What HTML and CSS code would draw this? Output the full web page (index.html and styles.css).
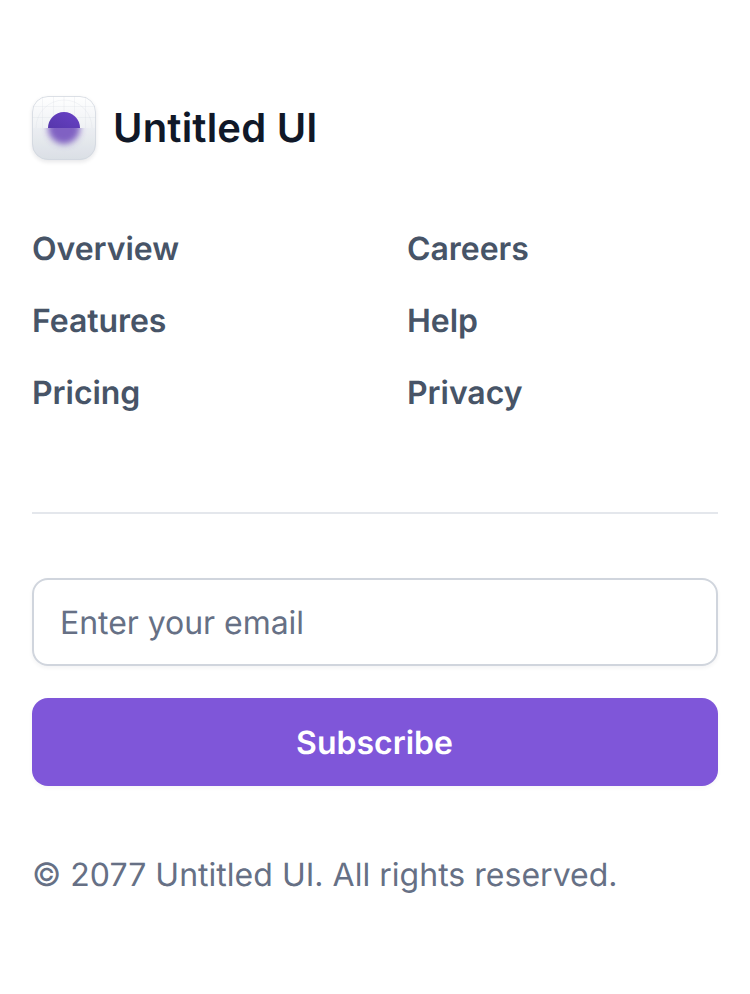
FILE: index.html
```html
<!DOCTYPE html>
<html lang="en">
<head>
<meta charset="utf-8">
<title>Untitled UI</title>
<link rel="stylesheet" href="styles.css">
</head>
<body>
<footer class="footer">
  <div class="brand">
    <div class="mark">
      <svg width="64" height="64" viewBox="0 0 64 64" aria-hidden="true">
        <defs>
          <linearGradient id="plate" x1="0" y1="0" x2="0" y2="1"><stop offset="0" stop-color="#fff"/><stop offset=".5" stop-color="#eff1f4"/><stop offset="1" stop-color="#dce0e6"/></linearGradient>
          <linearGradient id="dot" x1="0" y1="1" x2="1" y2="0"><stop offset="0" stop-color="#5637ab"/><stop offset="1" stop-color="#6941c6"/></linearGradient>
          <filter id="soft" x="-50%" y="-50%" width="200%" height="200%"><feGaussianBlur stdDeviation="3.2"/></filter>
          <clipPath id="round"><rect width="64" height="64" rx="16"/></clipPath>
          <clipPath id="lower"><rect y="32" width="64" height="32"/></clipPath>
        </defs>
        <g clip-path="url(#round)">
          <rect width="64" height="64" fill="url(#plate)"/>
          <path class="grid" d="M10.5 0V32M21.5 0V32M32 0V32M42.5 0V32M53.5 0V32M0 10.5H64M0 21.5H64M4 32a28 28 0 0 1 56 0"/>
          <path d="M16 32a16 16 0 0 1 32 0z" fill="url(#dot)"/>
          <rect y="32" width="64" height="32" fill="#d0d5dd" fill-opacity=".1"/>
          <g clip-path="url(#lower)"><circle cx="32" cy="32" r="16" fill="#6640b8" fill-opacity=".8" filter="url(#soft)"/></g>
        </g>
        <rect x=".5" y=".5" width="63" height="63" rx="15.5" fill="none" stroke="#d0d5dd" stroke-opacity=".75"/>
      </svg>
    </div>
    <span class="name">Untitled UI</span>
  </div>
  <nav class="links">
    <a>Overview</a><a>Careers</a>
    <a>Features</a><a>Help</a>
    <a>Pricing</a><a>Privacy</a>
  </nav>
  <form class="signup">
    <div class="field">Enter your email</div>
    <div class="button">Subscribe</div>
  </form>
  <p class="legal">© 2077 Untitled UI. All rights reserved.</p>
</footer>
</body>
</html>
```
FILE: styles.css
```css
body { margin: 0; background: #fff; font-family: Inter, sans-serif; text-rendering: geometricPrecision; }
.footer { padding: 96px 32px; }
.brand { display: flex; align-items: center; gap: 17px; height: 64px; }
.mark { width: 64px; height: 64px; border-radius: 16px; box-shadow: 0 2px 4px rgba(16,24,40,.1); }
.mark svg { display: block; }
.grid { fill: none; stroke: #d0d5dd; stroke-opacity: .22; stroke-width: 1; }
.name { font-size: 40px; line-height: 48px; font-weight: 600; letter-spacing: .2px; color: #101828; }
.links { display: grid; grid-template-columns: 1fr 1fr; column-gap: 64px; row-gap: 24px; margin-top: 65px; font-size: 32px; line-height: 48px; font-weight: 600; letter-spacing: -.05px; color: #475467; }
.signup { margin: 95px 0 0; padding-top: 64px; border-top: 2px solid #e4e7ec; display: flex; flex-direction: column; gap: 32px; }
.field, .button { box-sizing: border-box; height: 88px; border-radius: 16px; font-size: 32px; line-height: 48px; }
.field { padding: 19px 26px 17px; border: 2px solid #d0d5dd; color: #667085; letter-spacing: -.04px; box-shadow: 0 2px 4px rgba(16,24,40,.05); }
.button { padding: 21px 21px 19px 20px; background: #7f56d9; color: #fff; font-weight: 600; text-align: center; box-shadow: 0 2px 4px rgba(16,24,40,.04); }
.legal { margin: 65px 0 0; font-size: 32px; line-height: 48px; letter-spacing: .02px; color: #667085; }
```
